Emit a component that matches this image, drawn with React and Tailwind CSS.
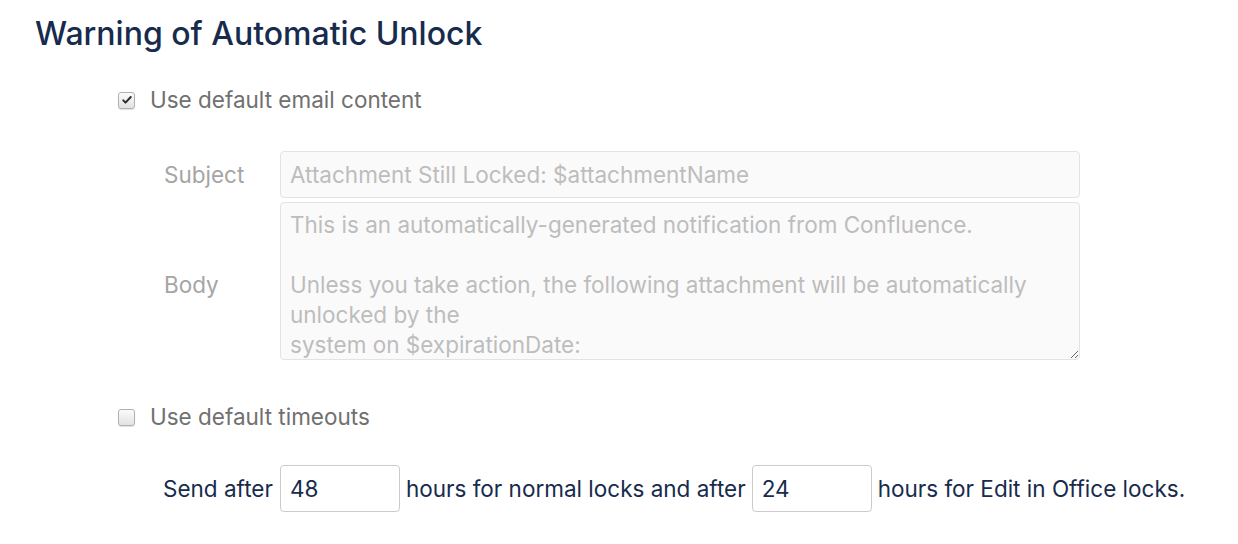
import React from 'react';

const font = { fontFamily: 'Inter, "Liberation Sans", sans-serif' };

function Check({ checked }) {
  return (
    <span className="relative flex h-[17px] w-[17px] shrink-0 items-center justify-center rounded-[3px] border border-[#b0b0b0] bg-gradient-to-b from-[#fbfbfb] to-[#e2e2e2] shadow-[0_1px_1px_rgba(0,0,0,0.12)]">
      {checked && (
        <svg viewBox="0 0 16 16" className="h-[12px] w-[12px]">
          <path d="M3 8.5l3 3 7-7.5" fill="none" stroke="#2b2b2b" strokeWidth="2.6" strokeLinecap="round" strokeLinejoin="round" />
        </svg>
      )}
    </span>
  );
}

export default function App() {
  const body =
    'This is an automatically-generated notification from Confluence.\n\nUnless you take action, the following attachment will be automatically\nunlocked by the\nsystem on $expirationDate:\n\n$attachmentName';

  return (
    <div className="h-[544px] w-[1238px] bg-white pl-[35px] pt-[14px]" style={font}>
      <h1 className="text-[32px] font-medium leading-[40px] text-[#172b4d]">Warning of Automatic Unlock</h1>

      <label className="ml-[83px] mt-[31px] flex h-[30px] items-center gap-[15px] text-[22.5px] text-[#707070]">
        <Check checked />
        <span>Use default email content</span>
      </label>

      <div className="ml-[129px] mt-[36px] grid grid-cols-[116px_800px] gap-y-[4px] text-[22.5px]">
        <div className="flex items-center text-[#a5a5a5]">Subject</div>
        <input
          readOnly
          disabled
          value="Attachment Still Locked: $attachmentName"
          className="h-[47px] rounded-[4px] border border-[#e3e3e3] bg-[#fafafa] px-[9px] text-[22.5px] text-[#bdbdbd] outline-none"
          style={font}
        />
        <div className="flex items-center pt-[7px] text-[#a5a5a5]">Body</div>
        <textarea
          readOnly
          value={body}
          className="h-[158px] resize-y overflow-hidden whitespace-pre rounded-[4px] border border-[#e3e3e3] bg-[#fafafa] px-[9px] pt-[7px] text-[22.5px] leading-[30px] text-[#bdbdbd] outline-none"
          style={font}
        />
      </div>

      <label className="ml-[83px] mt-[42px] flex h-[30px] items-center gap-[15px] text-[22.5px] text-[#707070]">
        <Check />
        <span>Use default timeouts</span>
      </label>

      <div className="ml-[128px] mt-[33px] flex items-center gap-[6px] text-[22.5px] text-[#172b4d]">
        <span>Send after</span>
        <input
          defaultValue="48"
          className="ml-[1px] h-[47px] w-[120px] rounded-[4px] border border-[#cccccc] bg-white px-[9px] text-[22.5px] text-[#172b4d] outline-none"
          style={font}
        />
        <span>hours for normal locks and after</span>
        <input
          defaultValue="24"
          className="h-[47px] w-[120px] rounded-[4px] border border-[#cccccc] bg-white px-[9px] text-[22.5px] text-[#172b4d] outline-none"
          style={font}
        />
        <span>hours for Edit in Office locks.</span>
      </div>
    </div>
  );
}
